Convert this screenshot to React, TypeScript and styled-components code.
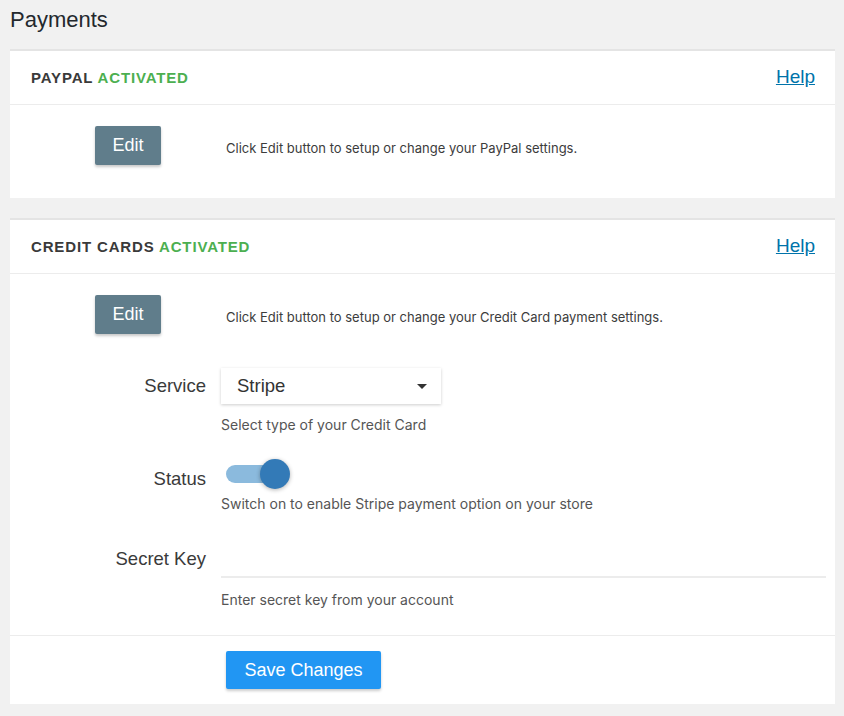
import React, { useState } from "react";
import styled, { createGlobalStyle } from "styled-components";

const Global = createGlobalStyle`
  html, body { margin: 0; padding: 0; background: #f1f1f1; }
  body { font-family: "Liberation Sans", Arial, sans-serif; color: #333; }
  * { box-sizing: border-box; }
`;

const Page = styled.div`
  padding: 0 9px 12px 10px;
  background: #f1f1f1;
`;

const Title = styled.h1`
  margin: 0 0 16px 0;
  padding-top: 7px;
  font-size: 22px;
  line-height: 26px;
  font-weight: 400;
  color: #23282d;
`;

const Card = styled.section`
  background: #fff;
  border-top: 2px solid #e4e4e4;
  margin-bottom: 20px;
`;

const CardHeader = styled.header`
  display: flex;
  align-items: center;
  justify-content: space-between;
  height: 54px;
  padding: 0 20px 0 21px;
  border-bottom: 1px solid #ececec;
`;

const CardTitle = styled.h2`
  margin: 0;
  font-size: 15px;
  font-weight: 700;
  letter-spacing: 0.85px;
  color: #3a3a3a;
`;

const Activated = styled.span`
  color: #4caf50;
`;

const HelpLink = styled.a`
  font-size: 19px;
  color: #0073aa;
  text-decoration: underline;
  cursor: pointer;
  margin-top: -2px;
`;

const CardBody = styled.div<{ $bottom: number }>`
  padding: 21px 9px ${(p) => p.$bottom}px 0;
`;

const FieldRow = styled.div<{ $top?: number }>`
  display: grid;
  grid-template-columns: 196px 1fr;
  column-gap: 15px;
  align-items: center;
  margin-top: ${(p) => p.$top ?? 0}px;
`;

const ButtonCell = styled.div`
  padding-left: 85px;
`;

const EditButton = styled.button`
  width: 66px;
  height: 39px;
  border: none;
  border-radius: 2px;
  background: #607d8b;
  color: #fff;
  font-family: "Liberation Sans", Arial, sans-serif;
  font-size: 18px;
  box-shadow: 0 2px 3px rgba(0, 0, 0, 0.22);
  cursor: pointer;
`;

const Description = styled.p`
  margin: 5px 0 0 5px;
  font-family: Inter, "Liberation Sans", sans-serif;
  font-size: 13px;
  color: #3c3c3c;
`;

const Label = styled.label<{ $shift?: number }>`
  justify-self: end;
  font-size: 18.5px;
  color: #3a3a3a;
  position: relative;
  top: ${(p) => p.$shift ?? 0}px;
`;

const HelpText = styled.div<{ $gap: number }>`
  grid-column: 2;
  margin-top: ${(p) => p.$gap}px;
  font-family: Inter, "Liberation Sans", sans-serif;
  font-size: 14px;
  line-height: 20px;
  color: #555;
`;

const SelectBox = styled.div`
  width: 220px;
  height: 36px;
  display: flex;
  align-items: center;
  justify-content: space-between;
  padding: 0 14px 0 16px;
  background: #fff;
  box-shadow: 0 1px 3px rgba(0, 0, 0, 0.2);
  font-size: 18.5px;
  color: #333;
  cursor: pointer;
`;

const Caret = styled.span`
  width: 0;
  height: 0;
  border-left: 5px solid transparent;
  border-right: 5px solid transparent;
  border-top: 5px solid #333;
`;

const SwitchWrap = styled.div`
  height: 30px;
  display: flex;
  align-items: center;
`;

const Track = styled.div<{ $on: boolean }>`
  position: relative;
  margin-left: 5px;
  width: 58px;
  height: 18px;
  border-radius: 9px;
  background: ${(p) => (p.$on ? "#8bbadd" : "#c8c8c8")};
  cursor: pointer;
`;

const Thumb = styled.span<{ $on: boolean }>`
  position: absolute;
  top: -6px;
  left: ${(p) => (p.$on ? "34px" : "-6px")};
  width: 30px;
  height: 30px;
  border-radius: 50%;
  background: ${(p) => (p.$on ? "#337ab7" : "#f5f5f5")};
  box-shadow: 0 1px 4px rgba(0, 0, 0, 0.3);
`;

const TextInput = styled.input`
  width: 100%;
  height: 38px;
  border: none;
  border-bottom: 2px solid #ececec;
  outline: none;
  font-size: 16px;
  font-family: "Liberation Sans", Arial, sans-serif;
  background: transparent;
`;

const Footer = styled.div`
  border-top: 1px solid #ececec;
  padding: 15px 0 15px 216px;
`;

const SaveButton = styled.button`
  width: 155px;
  height: 38px;
  border: none;
  border-radius: 2px;
  background: #2196f3;
  color: #fff;
  font-family: "Liberation Sans", Arial, sans-serif;
  font-size: 18px;
  box-shadow: 0 2px 3px rgba(0, 0, 0, 0.2);
  cursor: pointer;
`;

export default function App() {
  const [on, setOn] = useState(true);
  return (
    <Page>
      <Global />
      <Title>Payments</Title>

      <Card>
        <CardHeader>
          <CardTitle>
            PAYPAL <Activated>ACTIVATED</Activated>
          </CardTitle>
          <HelpLink>Help</HelpLink>
        </CardHeader>
        <CardBody $bottom={33}>
          <FieldRow>
            <ButtonCell>
              <EditButton>Edit</EditButton>
            </ButtonCell>
            <Description>Click Edit button to setup or change your PayPal settings.</Description>
          </FieldRow>
        </CardBody>
      </Card>

      <Card>
        <CardHeader>
          <CardTitle>
            CREDIT CARDS <Activated>ACTIVATED</Activated>
          </CardTitle>
          <HelpLink>Help</HelpLink>
        </CardHeader>
        <CardBody $bottom={25}>
          <FieldRow>
            <ButtonCell>
              <EditButton>Edit</EditButton>
            </ButtonCell>
            <Description>Click Edit button to setup or change your Credit Card payment settings.</Description>
          </FieldRow>

          <FieldRow $top={34}>
            <Label>Service</Label>
            <SelectBox>
              <span>Stripe</span>
              <Caret />
            </SelectBox>
            <HelpText $gap={11}>Select type of your Credit Card</HelpText>
          </FieldRow>

          <FieldRow $top={24}>
            <Label $shift={5}>Status</Label>
            <SwitchWrap>
              <Track $on={on} onClick={() => setOn(!on)}>
                <Thumb $on={on} />
              </Track>
            </SwitchWrap>
            <HelpText $gap={5}>Switch on to enable Stripe payment option on your store</HelpText>
          </FieldRow>

          <FieldRow $top={26}>
            <Label>Secret Key</Label>
            <TextInput />
            <HelpText $gap={12}>Enter secret key from your account</HelpText>
          </FieldRow>
        </CardBody>
        <Footer>
          <SaveButton>Save Changes</SaveButton>
        </Footer>
      </Card>
    </Page>
  );
}
